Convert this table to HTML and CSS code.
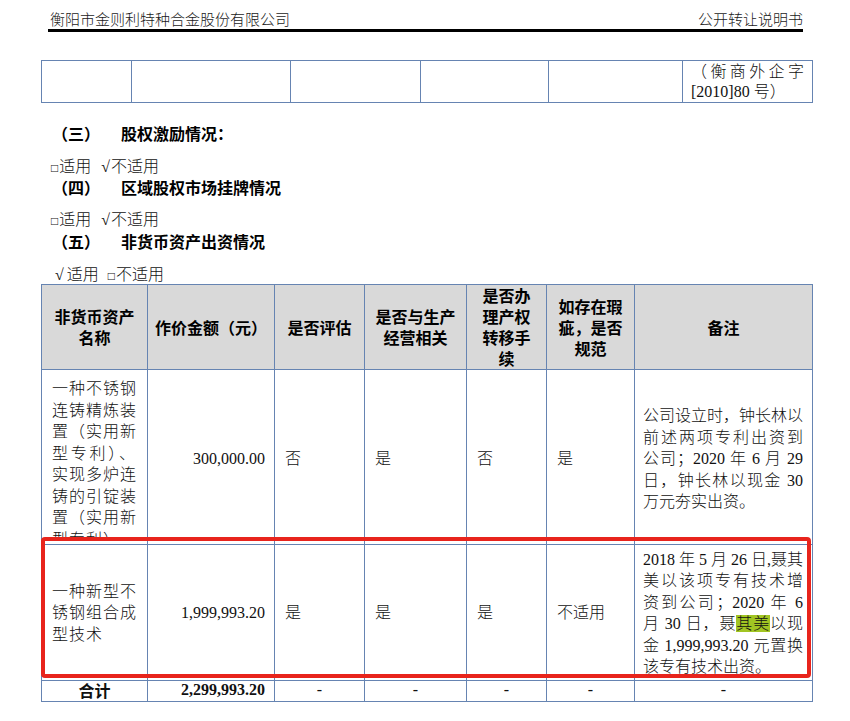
FILE: index.html
```html
<!DOCTYPE html>
<html lang="zh-CN">
<head>
<meta charset="utf-8">
<title>公开转让说明书</title>
<link rel="stylesheet" href="styles.css">
</head>
<body>
<div class="page">
  <header class="doc-head">
    <span>衡阳市金则利特种合金股份有限公司</span>
    <span>公开转让说明书</span>
  </header>

  <table class="prev">
    <colgroup>
      <col class="p1"><col class="p2"><col class="p3"><col class="p4"><col class="p5"><col class="p6">
    </colgroup>
    <tr>
      <td></td><td></td><td></td><td></td><td></td>
      <td class="ref"><span class="jl">（衡商外企字</span><span class="ln">[2010]80 号）</span></td>
    </tr>
  </table>

  <h3 class="sec s3"><span class="num">（三）</span><span>股权激励情况：</span></h3>
  <p class="opt o3"><span class="box">□</span>适用<span class="tick">√</span>不适用</p>
  <h3 class="sec s4"><span class="num">（四）</span><span>区域股权市场挂牌情况</span></h3>
  <p class="opt o4"><span class="box">□</span>适用<span class="tick">√</span>不适用</p>
  <h3 class="sec s5"><span class="num">（五）</span><span>非货币资产出资情况</span></h3>
  <p class="opt o5"><span class="tick first">√</span>适用<span class="box later">□</span>不适用</p>

  <div class="tbl-wrap">
    <table class="asset">
      <colgroup>
        <col class="c1"><col class="c2"><col class="c3"><col class="c4"><col class="c5"><col class="c6"><col class="c7">
      </colgroup>
      <tr class="hrow">
        <th>非货币资产<br>名称</th>
        <th>作价金额（元）</th>
        <th>是否评估</th>
        <th>是否与生产<br>经营相关</th>
        <th>是否办<br>理产权<br>转移手<br>续</th>
        <th>如存在瑕<br>疵，是否<br>规范</th>
        <th>备注</th>
      </tr>
      <tr class="r1">
        <td class="name top">
          <div class="clip">
            <span class="jl">一种不锈钢</span>
            <span class="jl">连铸精炼装</span>
            <span class="jl">置（实用新</span>
            <span class="jl">型专利）、</span>
            <span class="jl">实现多炉连</span>
            <span class="jl">铸的引锭装</span>
            <span class="jl">置（实用新</span>
            <span class="ln">型专利）</span>
          </div>
        </td>
        <td class="amt">300,000.00</td>
        <td class="txt">否</td>
        <td class="txt">是</td>
        <td class="txt">否</td>
        <td class="txt">是</td>
        <td class="note">
          <span class="jl">公司设立时，钟长林以</span>
          <span class="jl">前述两项专利出资到</span>
          <span class="jl">公司；2020 年 6 月 29</span>
          <span class="jl">日，钟长林以现金 30</span>
          <span class="ln">万元夯实出资。</span>
        </td>
      </tr>
      <tr class="r2">
        <td class="name">
          <span class="jl">一种新型不</span>
          <span class="jl">锈钢组合成</span>
          <span class="ln">型技术</span>
        </td>
        <td class="amt">1,999,993.20</td>
        <td class="txt">是</td>
        <td class="txt">是</td>
        <td class="txt">是</td>
        <td class="txt">不适用</td>
        <td class="note">
          <span class="jl">2018 年 5 月 26 日,聂其</span>
          <span class="jl">美以该项专有技术增</span>
          <span class="jl">资到公司；2020 年 6</span>
          <span class="jl">月 30 日，聂<mark class="hl">其美</mark>以现</span>
          <span class="jl">金 1,999,993.20 元置换</span>
          <span class="ln">该专有技术出资。</span>
        </td>
      </tr>
      <tr class="rsum">
        <td class="sum-label"><div class="cell-in">合计</div></td>
        <td class="amt sum-amt"><div class="cell-in">2,299,993.20</div></td>
        <td class="dash"><div class="cell-in">-</div></td>
        <td class="dash"><div class="cell-in">-</div></td>
        <td class="dash"><div class="cell-in">-</div></td>
        <td class="dash"><div class="cell-in">-</div></td>
        <td class="dash"><div class="cell-in">-</div></td>
      </tr>
    </table>
    <div class="mark-box"></div>
  </div>
</div>
</body>
</html>
```

FILE: styles.css
```css
html, body {
  margin: 0;
  padding: 0;
  background: #ffffff;
}

body {
  font-family: "Liberation Serif", "Noto Sans CJK SC", serif;
  color: #111111;
}

.page {
  width: 850px;
  height: 721px;
  overflow: hidden;
}

.doc-head {
  display: flex;
  justify-content: space-between;
  margin: 0 47px 0 48px;
  padding: 8px 0 0 2px;
  height: 21px;
  line-height: 21px;
  font-family: "Noto Sans CJK SC", sans-serif;
  font-weight: 300;
  font-size: 15px;
  color: #1a1a1a;
  border-bottom: 3px solid #000000;
}

.prev {
  margin: 28px 0 0 41px;
  width: 771px;
  border-collapse: collapse;
  table-layout: fixed;
}
.prev td {
  border: 1px solid #6684b2;
  height: 41px;
  padding: 0;
}
.p1 { width: 90px; }
.p2 { width: 159px; }
.p3 { width: 130px; }
.p4 { width: 128px; }
.p5 { width: 134px; }
.p6 { width: 130px; }

.prev .ref {
  padding: 0 8px 0 8px;
  font-size: 16px;
  line-height: 20px;
  font-weight: 300;
}
.prev .ref .jl,
.prev .ref .ln {
  height: 20px;
}

.jl {
  display: block;
  white-space: nowrap;
  text-align: justify;
  text-align-last: justify;
}
.ln {
  display: block;
  white-space: nowrap;
}

.sec {
  display: flex;
  height: 22px;
  margin: 0 0 0 52px;
  font-family: "Noto Sans CJK SC", sans-serif;
  font-weight: 700;
  font-size: 16px;
  line-height: 22px;
  color: #000000;
}
.sec.s3 { margin-top: 19px; }
.sec.s4 { margin-top: 0; }
.sec.s5 { margin-top: 1px; }
.sec .num {
  width: 69px;
}

.opt {
  height: 22px;
  margin: 0 0 0 51px;
  font-family: "Noto Sans CJK SC", sans-serif;
  font-weight: 300;
  font-size: 16px;
  line-height: 22px;
  color: #111111;
  overflow: visible;
}
.opt.o3 { margin-top: 10px; }
.opt.o4 { margin-top: 9px; }
.opt.o5 { margin-top: 10px; margin-left: 55px; }
.opt .box {
  font-family: "DejaVu Sans", sans-serif;
  font-size: 12px;
  line-height: 10px;
  margin-right: 1px;
}
.opt .box.later {
  margin-left: 9px;
}
.opt .tick {
  font-family: "Liberation Serif", serif;
  font-size: 16px;
  line-height: 10px;
  margin-left: 10px;
  margin-right: 1px;
}
.opt .tick.first {
  margin-left: 0;
  margin-right: 3px;
}

.tbl-wrap {
  position: relative;
  margin-top: 0;
}

.asset {
  margin-left: 41px;
  width: 771px;
  border-collapse: collapse;
  table-layout: fixed;
}
.c1 { width: 106px; }
.c2 { width: 127px; }
.c3 { width: 90px; }
.c4 { width: 102px; }
.c5 { width: 80px; }
.c6 { width: 88px; }
.c7 { width: 178px; }

.asset th,
.asset td {
  border: 1px solid #6684b2;
  padding: 0;
}

.asset th {
  background: #d9d9d9;
  font-family: "Noto Sans CJK SC", sans-serif;
  font-weight: 700;
  font-size: 16px;
  line-height: 21px;
  text-align: center;
  vertical-align: middle;
  color: #000000;
}
.hrow th { height: 84px; }

.asset td {
  font-size: 16px;
  line-height: 21.5px;
  font-weight: 300;
  vertical-align: middle;
}
.asset td .jl,
.asset td .ln {
  height: 21.5px;
}

.r1 td { height: 166px; padding-top: 4px; }
.r1 td.top { vertical-align: top; padding-top: 8px; }
.r2 td { height: 134px; padding-top: 1px; }

.name {
  padding-left: 10px !important;
  padding-right: 11px !important;
  letter-spacing: 1px;
}
.clip {
  height: 162px;
  overflow: hidden;
}

.amt {
  text-align: right;
  padding-right: 9px !important;
}
.txt {
  padding-left: 10px !important;
}
.note {
  padding-left: 8px !important;
  padding-right: 9px !important;
}

.hl {
  background: #a2c523;
  color: #111111;
}

.cell-in {
  height: 20px;
  line-height: 18px;
  overflow: visible;
}
.sum-label {
  text-align: center;
  font-family: "Noto Sans CJK SC", sans-serif;
  font-weight: 700 !important;
}
.sum-amt {
  font-weight: 700 !important;
}
.dash {
  text-align: center;
}

.mark-box {
  position: absolute;
  left: 41px;
  top: 253px;
  width: 770px;
  height: 141px;
  box-sizing: border-box;
  border: 4px solid #e8241c;
  border-radius: 4px;
}
```
